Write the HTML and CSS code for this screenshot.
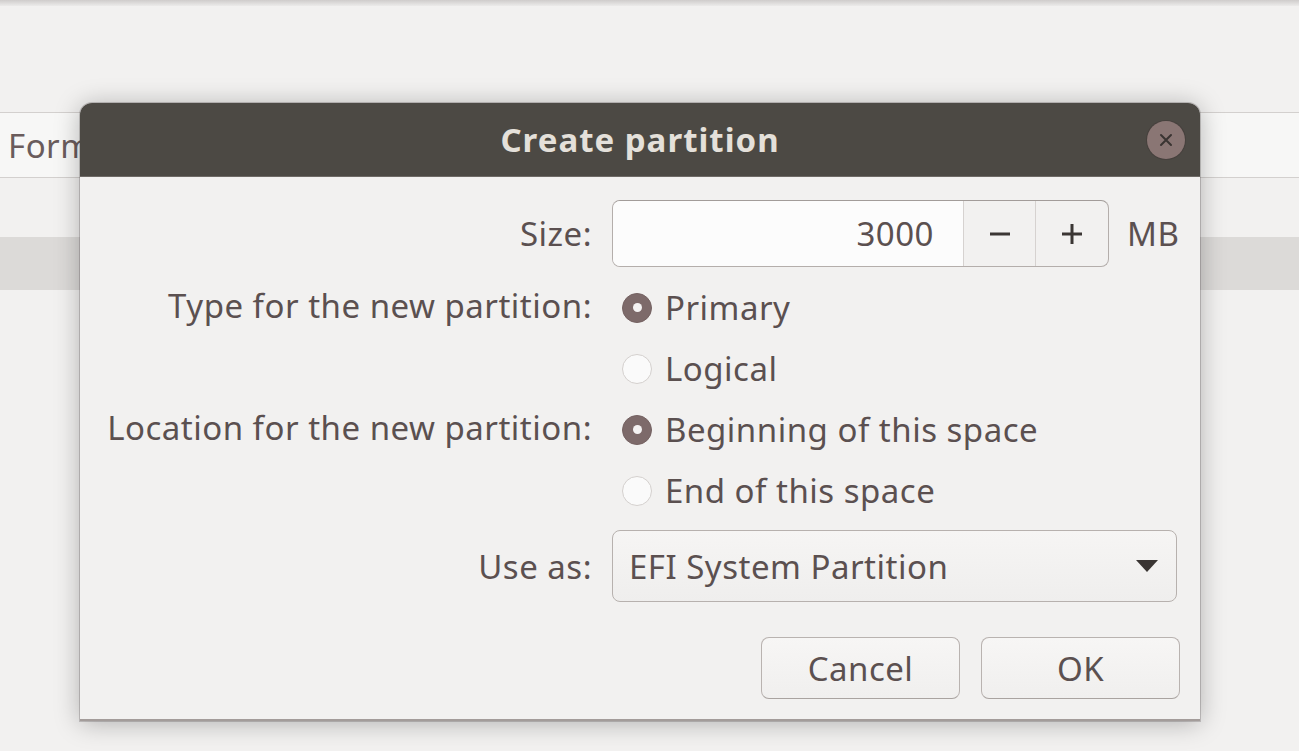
FILE: index.html
```html
<!DOCTYPE html>
<html>
<head>
<meta charset="utf-8">
<link rel="stylesheet" href="styles.css">
</head>
<body>
<div class="app">
  <div class="top-strip"></div>
  <div class="header-row"><span class="header-text">Format</span></div>
  <div class="spacer"></div>
  <div class="grey-band"></div>
</div>

<div class="dialog">
  <div class="titlebar">
    <span class="title">Create partition</span>
    <span class="close-btn">
      <svg width="14" height="14" viewBox="0 0 14 14"><path d="M2 2 L12 12 M12 2 L2 12" stroke="#3a3432" stroke-width="2" stroke-linecap="round"/></svg>
    </span>
  </div>
  <div class="body">
    <div class="form">
      <div class="label row-size">Size:</div>
      <div class="control row-size">
        <div class="spin">
          <div class="spin-entry">3000</div>
          <div class="spin-btn">
            <svg width="22" height="22" viewBox="0 0 22 22"><path d="M1 11 H21" stroke="#3b3634" stroke-width="3"/></svg>
          </div>
          <div class="spin-btn">
            <svg width="22" height="22" viewBox="0 0 22 22"><path d="M1 11 H21 M11 1 V21" stroke="#3b3634" stroke-width="3"/></svg>
          </div>
        </div>
        <span class="unit">MB</span>
      </div>

      <div class="label row-radio">Type for the new partition:</div>
      <div class="control row-radio"><span class="radio checked"></span><span>Primary</span></div>
      <div class="label row-radio"></div>
      <div class="control row-radio"><span class="radio"></span><span>Logical</span></div>

      <div class="label row-radio">Location for the new partition:</div>
      <div class="control row-radio"><span class="radio checked"></span><span>Beginning of this space</span></div>
      <div class="label row-radio"></div>
      <div class="control row-radio"><span class="radio"></span><span>End of this space</span></div>

      <div class="label row-combo">Use as:</div>
      <div class="control row-combo">
        <div class="combo">
          <span>EFI System Partition</span>
          <svg class="arrow" width="22" height="12" viewBox="0 0 22 12"><path d="M0 0 H22 L11 12 Z" fill="#3a3533"/></svg>
        </div>
      </div>
    </div>
    <div class="actions">
      <button class="btn">Cancel</button>
      <button class="btn">OK</button>
    </div>
  </div>
</div>
</body>
</html>
```

FILE: styles.css
```css
* { box-sizing: border-box; }
html, body {
  margin: 0;
  padding: 0;
  width: 1299px;
  height: 751px;
  overflow: hidden;
  background: #f2f1f0;
  font-family: "Noto Sans", "Open Sans", sans-serif;
  color: #5b5050;
}
.app {
  display: flex;
  flex-direction: column;
}
.top-strip {
  height: 6px;
  background: linear-gradient(#cfcccb, #ecebea);
}
.header-row {
  margin-top: 106px;
  height: 66px;
  background: #f7f7f6;
  border-top: 1px solid #d3d0ce;
  border-bottom: 1px solid #d3d0ce;
  display: flex;
  align-items: center;
  padding-left: 8px;
}
.header-text {
  font-size: 33px;
  letter-spacing: 0.5px;
  color: #6a5c5c;
}
.spacer { height: 59px; }
.grey-band {
  height: 53px;
  background: #dcdad8;
}

.dialog {
  position: absolute;
  left: 80px;
  top: 103px;
  width: 1120px;
  height: 618px;
  background: #f2f1f0;
  border-radius: 12px 12px 0 0;
  box-shadow: 0 2px 26px rgba(0,0,0,0.28), 0 0 0 1px rgba(80,70,70,0.25);
  border-bottom: 2px solid #a39c9a;
  display: flex;
  flex-direction: column;
}
.titlebar {
  height: 74px;
  flex: none;
  background: #4c4944;
  border-radius: 12px 12px 0 0;
  border-bottom: 1px solid #6e6a66;
  display: flex;
  align-items: center;
  justify-content: center;
  position: relative;
}
.title {
  color: #e4e0da;
  font-weight: bold;
  font-size: 33px;
  letter-spacing: 1px;
}
.close-btn {
  position: absolute;
  right: 15px;
  top: 18px;
  width: 38px;
  height: 38px;
  border-radius: 50%;
  background: #8a7674;
  box-shadow: 0 0 0 1px rgba(60,50,50,0.35);
  display: flex;
  align-items: center;
  justify-content: center;
}
.body {
  flex: 1;
  padding: 23px 0 0 20px;
  display: flex;
  flex-direction: column;
}
.form {
  display: grid;
  grid-template-columns: 492px 1fr;
  column-gap: 20px;
}
.label, .control {
  font-size: 33px;
  letter-spacing: 0.5px;
  white-space: nowrap;
  display: flex;
  align-items: center;
}
.label { justify-content: flex-end; }
.row-size { height: 67px; margin-bottom: 10px; }
.row-radio { height: 61px; }
.row-radio.label { padding-bottom: 4px; }
.row-combo { height: 72px; margin-top: 9px; }

.spin {
  width: 497px;
  height: 67px;
  display: flex;
  border: 1.5px solid #b4aeab;
  border-top-color: #a29c99;
  border-radius: 8px;
  overflow: hidden;
  background: #f2f1f0;
}
.spin-entry {
  flex: 1;
  background: #fcfcfc;
  display: flex;
  align-items: center;
  justify-content: flex-end;
  padding-right: 29px;
  color: #5b5050;
}
.spin-btn {
  width: 72px;
  border-left: 1px solid #d6d2d0;
  display: flex;
  align-items: center;
  justify-content: center;
}
.spin-btn + .spin-btn { width: 73px; }
.unit { margin-left: 18px; }

.radio {
  width: 30px;
  height: 30px;
  border-radius: 50%;
  margin-left: 10px;
  margin-right: 13px;
  background: #fafafa;
  border: 1.5px solid #d4d0ce;
  flex: none;
  position: relative;
}
.radio.checked {
  background: #7d6a6a;
  border-color: #756262;
}
.radio.checked::after {
  content: "";
  position: absolute;
  left: 50%;
  top: 50%;
  width: 9px;
  height: 9px;
  margin: -4.5px 0 0 -4.5px;
  border-radius: 50%;
  background: #f4f2f2;
}

.combo {
  width: 565px;
  height: 72px;
  border: 1.5px solid #b7b1ae;
  border-radius: 8px;
  background: linear-gradient(#f6f5f4, #efeeed);
  display: flex;
  align-items: center;
  justify-content: space-between;
  padding: 0 18px 0 16px;
}

.actions {
  display: flex;
  justify-content: flex-end;
  gap: 21px;
  margin-top: 35px;
  padding-right: 20px;
}
.btn {
  width: 199px;
  height: 62px;
  border: 1.5px solid #b9b3b0;
  border-bottom-color: #a9a3a0;
  border-radius: 8px;
  background: linear-gradient(#f7f6f5, #f0efee);
  font-family: inherit;
  font-size: 33px;
  letter-spacing: 0.5px;
  color: #5b5050;
}
```
